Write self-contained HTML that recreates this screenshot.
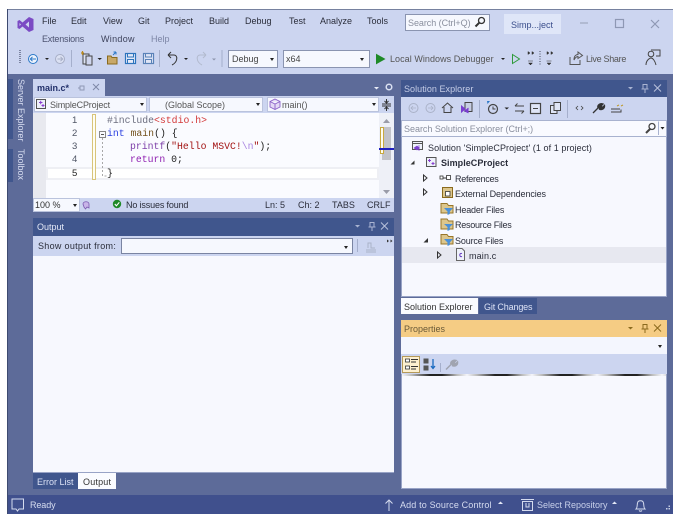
<!DOCTYPE html>
<html><head><meta charset="utf-8">
<style>
html,body{margin:0;padding:0;width:675px;height:522px;overflow:hidden;background:#fff}
*{box-sizing:border-box}
body{position:relative;font-family:"Liberation Sans",sans-serif;font-size:9px;color:#2a2d3a;filter:blur(.3px)}
.a{position:absolute}
.t{position:absolute;white-space:nowrap;line-height:12px;font-size:9px}
svg{position:absolute;overflow:visible}
.m{color:#4a4f68;font-family:"Liberation Mono",monospace;font-size:9.8px;line-height:13px;position:absolute;white-space:pre}
.n{position:absolute;left:72px;font-size:9.5px;line-height:13px;color:#4f5565}
.dd{position:absolute;width:0;height:0;border-left:2.5px solid transparent;border-right:2.5px solid transparent;border-top:3px solid #222}
.box{position:absolute;background:#f6f8fe;border:1px solid #9aa5c4}
</style></head><body>
<div class="a" style="left:7px;top:9px;width:666px;height:65px;background:#ccd5f0;border-top:1px solid #76819f"></div>
<div class="a" style="left:7px;top:74px;width:666px;height:421px;background:#5d6b99"></div>
<div class="a" style="left:7px;top:495px;width:666px;height:19px;background:#40508d"></div>
<div class="a" style="left:7px;top:9px;width:1px;height:505px;background:#3d4a70"></div>

<!-- logo -->
<svg style="left:17px;top:16px" width="17" height="17" viewBox="0 0 17 17"><path d="M12 1L16.500 3V14L12 16L5.500 10.500L2.500 13L0.500 12V5L2.500 4L5.500 6.500ZM12 5.500L8.500 8.500L12 11.500ZM2.500 7V10L4 8.500Z" fill="#7b4bc4"/></svg>
<!-- menu -->
<span class="t" style="left:42px;top:15px">File</span>
<span class="t" style="left:71px;top:15px">Edit</span>
<span class="t" style="left:103px;top:15px">View</span>
<span class="t" style="left:138px;top:15px">Git</span>
<span class="t" style="left:165px;top:15px">Project</span>
<span class="t" style="left:209px;top:15px">Build</span>
<span class="t" style="left:245px;top:15px">Debug</span>
<span class="t" style="left:289px;top:15px">Test</span>
<span class="t" style="left:320px;top:15px">Analyze</span>
<span class="t" style="left:367px;top:15px">Tools</span>
<span class="t" style="left:42px;top:33px;color:#4c5270;letter-spacing:-.2px">Extensions</span>
<span class="t" style="left:101px;top:33px;color:#3e435c;letter-spacing:.3px">Window</span>
<span class="t" style="left:151px;top:33px;color:#7d86a6">Help</span>
<!-- search -->
<div class="a" style="left:405px;top:14px;width:85px;height:17px;background:#f6f8fe;border:1px solid #8a94b0"></div>
<span class="t" style="left:408px;top:17px;color:#8a8f9e;letter-spacing:-.05px">Search (Ctrl+Q)</span>
<svg style="left:474px;top:16px" width="12" height="12"><circle cx="7.500" cy="4.500" r="3" fill="none" stroke="#333" stroke-width="1.300"/><path d="M5.300 6.700L1.500 10.500" stroke="#333" stroke-width="2"/></svg>
<div class="a" style="left:504px;top:14px;width:57px;height:20px;background:#dfe6f8"></div>
<span class="t" style="left:511px;top:19px;color:#3b4f8c">Simp...ject</span>
<svg style="left:0;top:0" width="675" height="40"><path d="M580 23H588" stroke="#a8b0c8" stroke-width="1.500"/><rect x="615.500" y="19.500" width="8" height="8" fill="none" stroke="#8e98b4" stroke-width="1.200"/><path d="M651 20L659 28M659 20L651 28" stroke="#8e98b4" stroke-width="1.200"/></svg>

<!-- toolbar 1 -->
<svg style="left:0;top:44px" width="675" height="30">
<path d="M20 6V20" stroke="#7a83a0" stroke-width="2" stroke-dasharray="1 1"/>
<circle cx="33" cy="15" r="4.500" fill="#eef3fc" stroke="#2a78c8" stroke-width="1"/><path d="M36 15H30.500M32.500 12.800L30.300 15L32.500 17.200" stroke="#2a78c8" fill="none" stroke-width="1"/>
<path d="M45 14H49L47 16Z" fill="#222"/>
<circle cx="60" cy="15" r="4.500" fill="#dbe1f3" stroke="#a7aec6" stroke-width="1"/><path d="M57.500 15H62.500M60.500 12.800L62.700 15L60.500 17.200" stroke="#a7aec6" fill="none"/>
<path d="M71.500 6V23" stroke="#a5afcc"/>
<rect x="83" y="10" width="6" height="10" fill="#dde3f4" stroke="#444" stroke-width="1"/><rect x="86" y="12" width="6" height="9" fill="#cfd6ee" stroke="#444" stroke-width="1"/><path d="M81 9H84M82.500 7V11" stroke="#b98a20" stroke-width="1.200"/>
<path d="M97.500 14H102L99.700 16Z" fill="#222"/>
<path d="M107.500 20V12H111L112 13.500H117V20Z" fill="#c8a868" stroke="#8a6a1e"/><path d="M113 11L116 8M116 8H113.500M116 8V10.500" stroke="#2a78c8" fill="none"/>
<rect x="125.500" y="9.500" width="10" height="10" fill="#e3e9f8" stroke="#2d74bd" stroke-width="1.200"/><rect x="127.500" y="9.500" width="6" height="3.500" fill="none" stroke="#2d74bd"/><rect x="127.500" y="15.500" width="6" height="4" fill="none" stroke="#2d74bd"/>
<rect x="143.500" y="9.500" width="10" height="10" fill="#dfe5f6" stroke="#5a82b8" stroke-width="1.200"/><rect x="145.500" y="9.500" width="6" height="3.500" fill="none" stroke="#5a82b8"/><rect x="145.500" y="15.500" width="6" height="4" fill="none" stroke="#5a82b8"/>
<path d="M159.500 6V23" stroke="#a5afcc"/>
<path d="M168 11H174C178 11 178 18 172 21M168 11L171 8M168 11L171 14" fill="none" stroke="#333" stroke-width="1"/>
<path d="M184 14H188L186 16Z" fill="#222"/>
<path d="M206 11H200C196 11 196 18 202 21M206 11L203 8M206 11L203 14" fill="none" stroke="#b2bace" stroke-width="1"/>
<path d="M212 14.500H216L214 16.500Z" fill="#8d95ad"/>
<path d="M222 6V23" stroke="#a5afcc"/>
</svg>
<div class="box" style="left:228px;top:50px;width:50px;height:18px;border-color:#8a94b0"></div>
<span class="t" style="left:232px;top:53px;color:#444">Debug</span>
<div class="dd" style="left:270px;top:58px"></div>
<div class="box" style="left:283px;top:50px;width:87px;height:18px;border-color:#8a94b0"></div>
<span class="t" style="left:286px;top:53px;color:#444">x64</span>
<div class="dd" style="left:360px;top:58px"></div>
<svg style="left:0;top:44px" width="675" height="30">
<path d="M376.500 10.500L384.500 15L376.500 19.500Z" fill="#1f8a28" stroke="#1f8a28"/>
<path d="M501 14H505L503 16Z" fill="#222"/>
<path d="M512.500 10.500L519.500 15L512.500 19.500Z" fill="none" stroke="#2f9a3a"/>
<path d="M528 7.500L530 9L528 10.500ZM532 7.500L534 9L532 10.500ZM528 17H533M528.500 19H532.500L530.500 21Z" fill="#333" stroke="#333" stroke-width=".5"/>
<path d="M539.500 7V22M540.500 7V22" stroke="#888fa5" stroke-dasharray="1 1.500"/>
<path d="M547 7.500L549 9L547 10.500ZM551 7.500L553 9L551 10.500ZM546.500 17H551.500M547 19H551L549 21Z" fill="#333" stroke="#333" stroke-width=".5"/>
<path d="M570 13V20.500H580V16M574 16C574 12 576 10.500 578 10.500V8L582.500 11.500L578 14.500V12.500C576 12.500 575 14 574 16Z" fill="none" stroke="#555" stroke-width="1"/>
<circle cx="651" cy="10" r="2.800" fill="none" stroke="#444"/><path d="M646 21C646 16 650 14 651 14C653 14 655 17 656 21M651 6H660V12H656" fill="none" stroke="#444"/>
</svg>
<span class="t" style="left:390px;top:53px;color:#555;letter-spacing:.05px">Local Windows Debugger</span>
<span class="t" style="left:586px;top:53px;color:#555;letter-spacing:-.3px">Live Share</span>

<!-- side tabs -->
<div class="a" style="left:8px;top:79px;width:5px;height:60px;background:#40568d"></div>
<div class="a" style="left:8px;top:149px;width:5px;height:33px;background:#40568d"></div>
<span class="t" style="left:15px;top:79px;color:#d6dcf0;transform-origin:0 0;transform:translate(12px,0) rotate(90deg);">Server Explorer</span>
<span class="t" style="left:15px;top:149px;color:#d6dcf0;transform-origin:0 0;transform:translate(12px,0) rotate(90deg);">Toolbox</span>

<!-- editor tab -->
<div class="a" style="left:33px;top:79px;width:72px;height:17px;background:#ccd5f0"></div>
<span class="t" style="left:37px;top:82px;font-weight:bold;color:#22306a">main.c*</span>
<svg style="left:78px;top:83px" width="24" height="10"><path d="M0 5H2M2 2.500V7.500M2 3H6V7H2" stroke="#8e98b4" fill="none"/><path d="M15 1L21 7M21 1L15 7" stroke="#7f89a8"/></svg>
<svg style="left:370px;top:82px" width="24" height="12"><path d="M4 5H9L6.500 7.500Z" fill="#e8ecf7"/><circle cx="19" cy="5" r="2.800" fill="none" stroke="#dbe1f2" stroke-width="1.500"/></svg>

<!-- navbar -->
<div class="a" style="left:33px;top:96px;width:361px;height:17px;background:#ccd5f0"></div>
<div class="box" style="left:34px;top:97px;width:113px;height:15px;border-color:#bac3dd"></div>
<div class="box" style="left:149px;top:97px;width:114px;height:15px;border-color:#bac3dd"></div>
<div class="box" style="left:267px;top:97px;width:112px;height:15px;border-color:#bac3dd"></div>
<svg style="left:36px;top:99px" width="12" height="11"><rect x=".5" y=".5" width="9" height="9" fill="#eef1fa" stroke="#555"/><path d="M3 3.500H6.500M4.700 1.800V5.200M5.500 6.500H8.500M7 5V8" stroke="#8a3fd0"/></svg>
<span class="t" style="left:50px;top:99px;color:#555;letter-spacing:-.15px">SimpleCProject</span>
<div class="dd" style="left:140px;top:103px"></div>
<span class="t" style="left:165px;top:99px;color:#555">(Global Scope)</span>
<div class="dd" style="left:256px;top:103px"></div>
<svg style="left:269px;top:98px" width="12" height="13"><path d="M6 1L11 3.500V9L6 11.500L1 9V3.500ZM1 3.500L6 6L11 3.500M6 6V11.500" fill="#e3d8f5" stroke="#8a5fc8" stroke-width=".9"/></svg>
<span class="t" style="left:282px;top:99px;color:#555">main()</span>
<div class="dd" style="left:372px;top:103px"></div>
<svg style="left:381px;top:98px" width="12" height="14"><path d="M1 6H10M1 8H10M5.500 1V5M5.500 9V13M3.500 3L5.500 5L7.500 3M3.500 11L5.500 9L7.500 11" stroke="#333" fill="none"/></svg>

<!-- editor -->
<div class="a" style="left:33px;top:113px;width:361px;height:85px;background:#fafbff"></div>
<div class="a" style="left:33px;top:113px;width:13px;height:85px;background:#e8e9ef"></div>
<div class="a" style="left:46px;top:167px;width:333px;height:13px;background:#fff;border:2px solid #eeeff4"></div>
<div class="a" style="left:92px;top:114px;width:4px;height:66px;background:#fffdf2;border:1px solid #d8c47a"></div>
<span class="n" style="top:114px">1</span>
<span class="n" style="top:127px">2</span>
<span class="n" style="top:140px">3</span>
<span class="n" style="top:153px">4</span>
<span class="n" style="top:167px;color:#222">5</span>
<svg style="left:96px;top:126px" width="18" height="55"><rect x="3.500" y="5.500" width="6" height="6" fill="#fafbff" stroke="#888"/><path d="M5 8.500H8" stroke="#555"/><path d="M6.500 12V50H11" fill="none" stroke="#a8a8a8" stroke-dasharray="2 2"/></svg>
<span class="m" style="left:107px;top:113.500px"><span style="color:#6d6f80">#include</span><span style="color:#d33a3a">&lt;stdio.h&gt;</span></span>
<span class="m" style="left:107px;top:127px"><span style="color:#2a3fe0">int</span> <span style="color:#74531f">main</span><span style="color:#222">() {</span></span>
<span class="m" style="left:130px;top:140px"><span style="color:#7d3fa8">printf</span><span style="color:#222">(</span><span style="color:#a31515">"Hello MSVC!</span><span style="color:#a884e0">\n</span><span style="color:#a31515">"</span><span style="color:#222">);</span></span>
<span class="m" style="left:130px;top:153px"><span style="color:#8f1fb0">return</span> <span style="color:#222">0;</span></span>
<span class="m" style="left:107px;top:167px;color:#222">}</span>
<!-- editor scrollbar -->
<div class="a" style="left:379px;top:113px;width:15px;height:85px;background:#eef0f7"></div>
<div class="a" style="left:382px;top:127px;width:9px;height:33px;background:#c2c3c9"></div>
<div class="a" style="left:380px;top:127px;width:4px;height:27px;background:#fffdf2;border:1px solid #c9a93f"></div>
<div class="a" style="left:379px;top:148px;width:15px;height:2px;background:#1f1fc0"></div>
<svg style="left:379px;top:113px" width="15" height="85"><path d="M4 10L7.500 6L11 10ZM4 77H11L7.500 81Z" fill="#9a9ca8"/></svg>
<!-- editor status -->
<div class="a" style="left:33px;top:198px;width:361px;height:14px;background:#ccd5f0"></div>
<div class="box" style="left:33px;top:198px;width:47px;height:14px;border-color:#bac3dd"></div>
<span class="t" style="left:35px;top:199px;color:#333">100 %</span>
<div class="dd" style="left:73px;top:204px"></div>
<svg style="left:81px;top:199px" width="12" height="12"><path d="M2 5C2 2 8 2 8 5V9L6 8L4.500 10L3 8Z" fill="#c8b5e8" stroke="#7a5ab0" stroke-width=".8"/></svg>
<svg style="left:112px;top:199px" width="10" height="10"><circle cx="5" cy="5" r="4.200" fill="#1f8a28"/><path d="M2.800 5L4.400 6.800L7.300 3.300" fill="none" stroke="#fff" stroke-width="1.100"/></svg>
<span class="t" style="left:126px;top:199px;letter-spacing:-.15px">No issues found</span>
<span class="t" style="left:265px;top:199px">Ln: 5</span>
<span class="t" style="left:298px;top:199px">Ch: 2</span>
<span class="t" style="left:332px;top:199px">TABS</span>
<span class="t" style="left:367px;top:199px">CRLF</span>

<!-- output -->
<div class="a" style="left:33px;top:218px;width:361px;height:18px;background:#40568d"></div>
<span class="t" style="left:37px;top:221px;color:#e4e9f7">Output</span>
<svg style="left:350px;top:221px" width="44" height="12"><path d="M5 4H10L7.500 6.500Z" fill="#aab4d2"/><path d="M20 1.500H24V6H20ZM22 6V10M18.500 6H25.500" fill="none" stroke="#aab4d2"/><path d="M31 1.500L38 8.500M38 1.500L31 8.500" stroke="#b8c1dc"/></svg>
<div class="a" style="left:33px;top:236px;width:361px;height:20px;background:#ccd5f0"></div>
<span class="t" style="left:38px;top:240px;letter-spacing:.3px">Show output from:</span>
<div class="box" style="left:121px;top:238px;width:232px;height:16px;border-color:#7a84a2"></div>
<div class="dd" style="left:344px;top:246px"></div>
<svg style="left:355px;top:237px" width="38" height="18"><path d="M2.500 2V15" stroke="#a5afcc"/><path d="M11 13H21M11 15H21M13 11V6H16V11H20" fill="none" stroke="#aab2c8"/><path d="M32 2.500L34 4L32 5.500ZM35.500 2.500L37.500 4L35.500 5.500Z" fill="#333"/></svg>
<div class="a" style="left:33px;top:256px;width:361px;height:217px;background:#f7f8fe;border-bottom:1px solid #98a3c6"></div>
<div class="a" style="left:33px;top:473px;width:45px;height:16px;background:#40568d"></div>
<span class="t" style="left:37px;top:476px;color:#dce2f5">Error List</span>
<div class="a" style="left:78px;top:473px;width:38px;height:16px;background:#fafbff"></div>
<span class="t" style="left:83px;top:476px;color:#333;letter-spacing:.2px">Output</span>

<!-- solution explorer -->
<div class="a" style="left:401px;top:80px;width:266px;height:217px;background:#f7f8fe;border:1px solid #98a3c6"></div>
<div class="a" style="left:401px;top:80px;width:266px;height:17px;background:#40568d"></div>
<span class="t" style="left:404px;top:83px;color:#c4cce6;letter-spacing:.05px">Solution Explorer</span>
<svg style="left:623px;top:83px" width="44" height="12"><path d="M5 4H10L7.500 6.500Z" fill="#aab4d2"/><path d="M20 1.500H24V6H20ZM22 6V10M18.500 6H25.500" fill="none" stroke="#aab4d2"/><path d="M31 1.500L38 8.500M38 1.500L31 8.500" stroke="#b8c1dc"/></svg>
<div class="a" style="left:401px;top:97px;width:266px;height:23px;background:#ccd5f0"></div>
<svg style="left:401px;top:97px" width="266" height="23">
<circle cx="12.500" cy="11" r="4.500" fill="none" stroke="#aab2c8"/><path d="M15 11H10M12 9L10 11L12 13" fill="none" stroke="#aab2c8" stroke-width=".8"/>
<circle cx="29.500" cy="11" r="4.500" fill="none" stroke="#aab2c8"/><path d="M27 11H32M30 9L32 11L30 13" fill="none" stroke="#aab2c8" stroke-width=".8"/>
<path d="M41 11L46.500 6L52 11M43 10V15.500H50V10" fill="none" stroke="#444"/>
<rect x="64" y="5.500" width="7" height="9" fill="#c8cee4" stroke="#444"/><path d="M60.500 9L64 12L60.500 15ZM67.500 11L64 14L67.500 16" fill="#7b3fd0" stroke="#7b3fd0"/>
<path d="M78.500 3V21" stroke="#a5afcc"/>
<circle cx="92" cy="12" r="4.500" fill="none" stroke="#444" stroke-width="1.200"/><path d="M92 9.500V12H94.500" fill="none" stroke="#444"/><path d="M86 4L89 4L86.500 7Z" fill="#2a78c8"/>
<path d="M103.500 10.500H108L105.700 12.500Z" fill="#222"/>
<path d="M114 9H123M114 9L116.500 6.500M114 14H123M123 14L120.500 16.500" fill="none" stroke="#444"/>
<rect x="129.500" y="6.500" width="10" height="10" fill="#dfe5f6" stroke="#444" stroke-width="1.200"/><path d="M132 11.500H137" stroke="#444"/>
<rect x="149.500" y="8.500" width="6.500" height="8" fill="#dfe5f6" stroke="#444"/><rect x="153" y="5.500" width="6.500" height="8" fill="#dfe5f6" stroke="#444"/>
<path d="M166.500 3V21" stroke="#a5afcc"/>
<path d="M177 9L175 11L177 13M180 9L182 11L180 13" fill="none" stroke="#444" stroke-width=".8"/>
<path d="M192 16L197 11M197 11C196 8 199 6 202 7L200 9L201.500 10.500L203.500 8.500C204 11.500 201 13.500 198 12" fill="#333" stroke="#333" stroke-width="1.300"/>
<path d="M210 12H219M210 15H220V12.500" fill="none" stroke="#444"/><path d="M216 9L218 8M220 9L222 8" stroke="#c09a2a"/>
</svg>
<div class="a" style="left:401px;top:120px;width:266px;height:17px;background:#f9faff;border:1px solid #a8b2cf"></div>
<span class="t" style="left:404px;top:123px;color:#8a8f9e;letter-spacing:-.02px">Search Solution Explorer (Ctrl+;)</span>
<svg style="left:643px;top:121px" width="22" height="15"><circle cx="9" cy="5.500" r="3" fill="none" stroke="#444" stroke-width="1.300"/><path d="M7 8L3 12" stroke="#444" stroke-width="2"/><path d="M15.500 .5V14" stroke="#a8b2cf"/><path d="M17.500 6H21.500L19.500 8.500Z" fill="#222"/></svg>

<div class="a" style="left:402px;top:247px;width:264px;height:16px;background:#e7e8f0"></div>
<svg style="left:401px;top:137px" width="120" height="130">
<rect x="11.500" y="4.500" width="10" height="8" fill="#eef1fa" stroke="#555"/><path d="M11.500 6.500H21.500" stroke="#555"/><path d="M16 9L18.500 11L16 13L13 11ZM18 8V14" fill="#7b3fd0" stroke="#7b3fd0" stroke-width=".6"/>
<path d="M13.500 23.500V27.500H9.500Z" fill="#333"/>
<rect x="25.500" y="20.500" width="9.500" height="9" fill="#eef1fa" stroke="#555"/><path d="M27 23.500H30M28.500 22V25M30.500 26.500H33.500M32 25V28" stroke="#8a3fd0"/>
<path d="M22.500 38V44L26 41Z M22.500 52V58L26 55Z" fill="none" stroke="#333"/>
<path d="M39 41H48" stroke="#333"/><rect x="39" y="39" width="3" height="3" fill="#fff" stroke="#333" stroke-width=".8"/><rect x="45.500" y="38.500" width="4" height="4" fill="#fff" stroke="#333" stroke-width=".8"/>
<rect x="41.500" y="50.500" width="10" height="10" fill="#dcc68c" stroke="#8a6a1e"/><rect x="44.500" y="54.500" width="4.500" height="4.500" fill="#fff" stroke="#333" stroke-width=".8"/>
<path d="M40 66.500H46L47.500 68.500H52V76H40Z" fill="#dcc68c" stroke="#98762a"/><path d="M43 71H52L48.800 74.500V77L46.500 78V74.500Z" fill="#4a90d9"/>
<path d="M40 82H46L47.500 84H52V92H40Z" fill="#dcc68c" stroke="#98762a"/><path d="M43 87H52L48.800 90V93L46.500 94V90Z" fill="#4a90d9"/>
<path d="M40 97.500H46L47.500 99.500H52V107H40Z" fill="#dcc68c" stroke="#98762a"/><path d="M43 102H52L48.800 105.500V108L46.500 109V105.500Z" fill="#4a90d9"/>
<path d="M27 101V105.500H22.500Z" fill="#333"/>
<path d="M36.500 115V121L40 118Z" fill="none" stroke="#333"/>
<path d="M55.500 111.500H61L63.500 114V123.500H55.500Z" fill="#eef1fa" stroke="#666"/>
<path d="M61 116.500C58 115.500 58 120.500 61 119.500" fill="none" stroke="#6a3fc0"/>
</svg>
<span class="t" style="left:428px;top:142px;letter-spacing:.07px">Solution 'SimpleCProject' (1 of 1 project)</span>
<span class="t" style="left:441px;top:157px;font-weight:bold;letter-spacing:.05px">SimpleCProject</span>
<span class="t" style="left:455px;top:173px;letter-spacing:-.25px">References</span>
<span class="t" style="left:455px;top:188px;letter-spacing:-.1px">External Dependencies</span>
<span class="t" style="left:455px;top:204px;letter-spacing:-.15px">Header Files</span>
<span class="t" style="left:455px;top:219px;letter-spacing:-.25px">Resource Files</span>
<span class="t" style="left:455px;top:235px;letter-spacing:-.15px">Source Files</span>
<span class="t" style="left:469px;top:250px;letter-spacing:.15px">main.c</span>

<div class="a" style="left:401px;top:298px;width:77px;height:16px;background:#fafbff"></div>
<span class="t" style="left:404px;top:301px;color:#333">Solution Explorer</span>
<div class="a" style="left:479px;top:298px;width:58px;height:16px;background:#40568d"></div>
<span class="t" style="left:484px;top:301px;color:#dce2f5;letter-spacing:-.15px">Git Changes</span>

<!-- properties -->
<div class="a" style="left:401px;top:320px;width:266px;height:17px;background:#f5cc84"></div>
<span class="t" style="left:404px;top:323px;color:#6a5a38">Properties</span>
<svg style="left:623px;top:323px" width="44" height="12"><path d="M5 4H10L7.500 6.500Z" fill="#8a6a1e"/><path d="M20 1.500H24V6H20ZM22 6V10M18.500 6H25.500" fill="none" stroke="#8a6a1e"/><path d="M31 1.500L38 8.500M38 1.500L31 8.500" stroke="#8a6a1e"/></svg>
<div class="a" style="left:401px;top:337px;width:266px;height:17px;background:#f4f6fe"></div>
<div class="dd" style="left:658px;top:345px"></div>
<div class="a" style="left:401px;top:354px;width:266px;height:20px;background:#ccd5f0"></div>
<div class="a" style="left:402px;top:356px;width:18px;height:17px;background:#fdf0d0;border:1px solid #b59a5a"></div>
<svg style="left:401px;top:354px" width="60" height="20">
<rect x="4.500" y="5" width="4" height="3" fill="#fff" stroke="#333" stroke-width=".8"/><rect x="4.500" y="12" width="4" height="3" fill="#fff" stroke="#333" stroke-width=".8"/><path d="M10 5.500H17M10 8H15M10 12.500H17M10 15H15" stroke="#333"/>
<rect x="22.500" y="4.500" width="5" height="5" fill="#555"/><rect x="22.500" y="11.500" width="5" height="5" fill="#555"/><path d="M32 5V14M30 12L32 14.500L34 12" fill="none" stroke="#1a6ac0" stroke-width="1.300"/>
<path d="M39.500 9V18" stroke="#a5afcc"/>
<path d="M45 15.500L50 10.500M50 10.500C49 8 52 5.500 55 6.500L53 8.500L54.500 10L56.500 8C57 11 54 13 51 11.500" fill="#a0a4b0" stroke="#a0a4b0" stroke-width="1.500"/>
</svg>
<div class="a" style="left:401px;top:374px;width:266px;height:115px;background:#f7f8fe;border:1px solid #98a3c6;border-top:0"></div>
<div class="a" style="left:402px;top:374px;width:264px;height:2px;background:repeating-linear-gradient(90deg,#f4f5fa 0,#bbb 10px,#222 28px,#222 40px,#bbb 55px,#f4f5fa 65px)"></div>

<!-- status bar -->
<svg style="left:0;top:495px" width="675" height="19">
<path d="M12 4H23.500V14H19L17.500 16L16 14H12Z" fill="none" stroke="#d5dbee"/>
<path d="M389 16V5M385.500 8.500L389 5L392.500 8.500" fill="none" stroke="#d5dbee"/>
<path d="M498 9H503L500.500 6.500Z" fill="#e4e9f7"/>
<rect x="522.500" y="6.500" width="10" height="9" fill="none" stroke="#d5dbee"/><path d="M521 4.500H534M526 8V12H529V8" fill="none" stroke="#d5dbee"/>
<path d="M612 9H617L614.500 6.500Z" fill="#e4e9f7"/>
<path d="M636 14H645C643.500 12.500 644 10 643.500 8C643 5 638 5 637.500 8C637 10 637.500 12.500 636 14ZM639 15.500C640 16.500 641 16.500 642 15.500" fill="none" stroke="#d5dbee"/>
<path d="M666 13h1.500v1.500H666zM668.500 13h1.500v1.500h-1.500zM668.500 10.500h1.500v1.500h-1.500z" fill="#c5cce2"/>
</svg>
<span class="t" style="left:30px;top:499px;color:#d6dcf0;letter-spacing:-.1px">Ready</span>
<span class="t" style="left:400px;top:499px;color:#d6dcf0;letter-spacing:.15px">Add to Source Control</span>
<span class="t" style="left:537px;top:499px;color:#c8d0ea">Select Repository</span>
</body></html>
